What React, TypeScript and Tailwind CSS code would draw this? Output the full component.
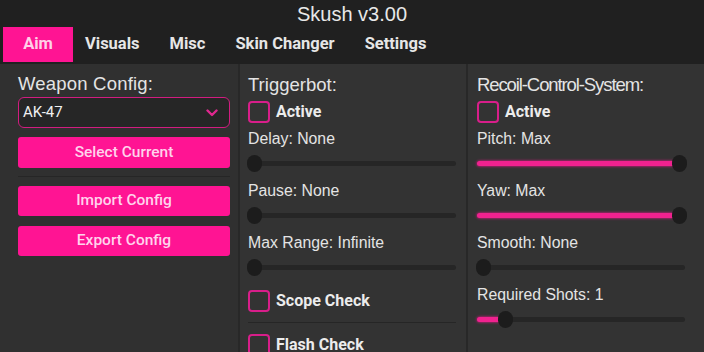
import React from "react";

const PINK = "bg-[#ff1493]";

function Checkbox({ label }: { label: string }) {
  return (
    <div className="flex items-center h-[22px]">
      <div className="w-[22px] h-[22px] border-2 border-[#d81e8a] rounded-[4px] shrink-0" />
      <span className="ml-[6px] text-[16px] font-bold text-[#ececec] font-['Roboto',sans-serif] leading-none">
        {label}
      </span>
    </div>
  );
}

function Label({ text }: { text: string }) {
  return (
    <div className="h-[18px] leading-[18px] text-[15.8px] text-[#e4e4e4] font-['Liberation_Sans',Arial,sans-serif] whitespace-nowrap">
      {text}
    </div>
  );
}

function Slider({ pct }: { pct: number }) {
  return (
    <div className="relative h-[17px] w-full mt-[7px] shrink-0">
      <div className="absolute left-0 right-0 top-[6px] h-[5px] rounded-full bg-[#262626]" />
      {pct > 0 && (
        <div
          className="absolute left-0 top-[6px] h-[5px] rounded-full bg-[#f0228f] shadow-[0_0_3px_#ff1493]"
          style={{ width: `calc(${pct} * (100% - 12px) + 6px)` }}
        />
      )}
      <div
        className="absolute top-0 w-[15px] h-[17px] rounded-full bg-[#1c1c1c]"
        style={{ left: `calc(${pct} * (100% - 12px) - 1px)` }}
      />
    </div>
  );
}

function Button({ text, h, mt }: { text: string; h: string; mt: string }) {
  return (
    <div
      className={`${PINK} ${h} ${mt} shrink-0 rounded-[3px] flex items-center justify-center text-[15.5px] font-medium text-[#ffd3ec] font-['Roboto',sans-serif]`}
    >
      {text}
    </div>
  );
}

function Title({ text, cls = "" }: { text: string; cls?: string }) {
  return (
    <div
      className={`h-[20px] leading-[20px] text-[18.5px] text-[#e4e4e4] font-['Liberation_Sans',Arial,sans-serif] whitespace-nowrap ${cls}`}
    >
      {text}
    </div>
  );
}

export default function App() {
  return (
    <div className="w-[704px] h-[352px] bg-[#202020] flex flex-col overflow-hidden">
      <div className="h-[27px] shrink-0 flex items-center justify-center text-[20px] text-[#e8e8e8] font-['Liberation_Sans',Arial,sans-serif] pt-[1px]">
        Skush v3.00
      </div>
      <div className="h-[37px] shrink-0 flex pl-[3px] pb-[2px] font-['Roboto',sans-serif] font-bold text-[16.5px] text-[#e6e6e6]">
        <div className={`w-[70px] ${PINK} flex items-center justify-center text-[#ffd0e8]`}>Aim</div>
        <div className="ml-[12px] flex items-center gap-[30px]">
          <span>Visuals</span>
          <span>Misc</span>
          <span>Skin Changer</span>
          <span>Settings</span>
        </div>
      </div>
      <div className="flex-1 min-h-0 overflow-hidden flex bg-[#333333]">
        <div className="w-[238px] pl-[18px] pr-[8px] pt-[10px] bg-[#303030] flex flex-col">
          <Title text="Weapon Config:" cls="tracking-[0.2px]" />
          <div className="mt-[3px] h-[31px] shrink-0 rounded-[6px] border border-[#d21c80] bg-[#262626] flex items-center justify-between pl-[4px] pr-[11px]">
            <span className="text-[15px] text-[#f0f0f0] font-['Roboto',sans-serif]">AK-47</span>
            <svg width="12" height="8" viewBox="0 0 12 8">
              <polyline points="1.5,1.5 6,6 10.5,1.5" fill="none" stroke="#e0288f" strokeWidth="2.4" strokeLinecap="round" strokeLinejoin="round" />
            </svg>
          </div>
          <Button text="Select Current" h="h-[31px]" mt="mt-[9px]" />
          <div className="mt-[8px] h-[1px] shrink-0 bg-[#262626]" />
          <Button text="Import Config" h="h-[30px]" mt="mt-[9px]" />
          <Button text="Export Config" h="h-[30px]" mt="mt-[10px]" />
        </div>
        <div className="w-[2px] bg-[#282828]" />
        <div className="w-[226px] pl-[8px] pr-[10px] pt-[11px] flex flex-col">
          <Title text="Triggerbot:" />
          <div className="mt-[6px] shrink-0"><Checkbox label="Active" /></div>
          <div className="mt-[7px] shrink-0"><Label text="Delay: None" /></div>
          <Slider pct={0} />
          <div className="mt-[10px] shrink-0"><Label text="Pause: None" /></div>
          <Slider pct={0} />
          <div className="mt-[10px] shrink-0"><Label text="Max Range: Infinite" /></div>
          <Slider pct={0} />
          <div className="mt-[14px] shrink-0"><Checkbox label="Scope Check" /></div>
          <div className="mt-[10px] h-[1px] shrink-0 bg-[#262626]" />
          <div className="mt-[11px] shrink-0"><Checkbox label="Flash Check" /></div>
        </div>
        <div className="w-[2px] bg-[#282828]" />
        <div className="flex-1 pl-[9px] pr-[19px] pt-[11px] flex flex-col">
          <Title text="Recoil-Control-System:" cls="tracking-[-1.1px]" />
          <div className="mt-[6px] shrink-0"><Checkbox label="Active" /></div>
          <div className="mt-[7px] shrink-0"><Label text="Pitch: Max" /></div>
          <Slider pct={1} />
          <div className="mt-[10px] shrink-0"><Label text="Yaw: Max" /></div>
          <Slider pct={1} />
          <div className="mt-[10px] shrink-0"><Label text="Smooth: None" /></div>
          <Slider pct={0} />
          <div className="mt-[10px] shrink-0"><Label text="Required Shots: 1" /></div>
          <Slider pct={0.11} />
        </div>
      </div>
    </div>
  );
}
